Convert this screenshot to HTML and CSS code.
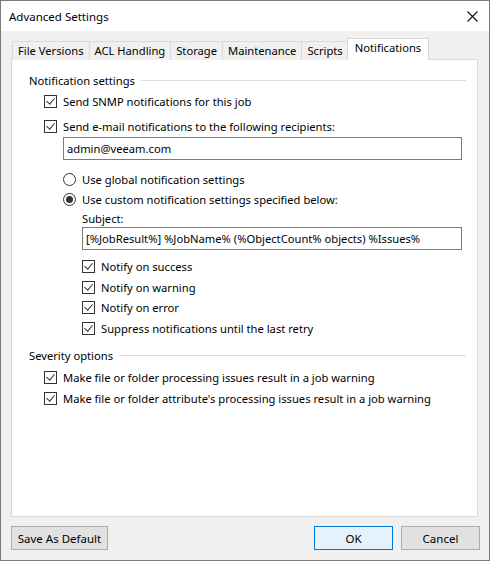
FILE: index.html
```html
<!DOCTYPE html>
<html lang="en">
<head>
    <meta charset="UTF-8">
    <title>Advanced Settings</title>
    <link rel="stylesheet" href="styles.css">
</head>
<body>

    <div class="window">
        <div class="titlebar">
            <span class="title">Advanced Settings</span>
            <span class="close">
                <svg width="11" height="11" viewBox="0 0 11 11"><path d="M0.5 0.5 L10.5 10.5 M10.5 0.5 L0.5 10.5" stroke="#111" stroke-width="1.1" fill="none"/></svg>
            </span>
        </div>

        <div class="dialog">
            <div class="tabs">
                <div class="tab">File Versions</div>
                <div class="tab">ACL Handling</div>
                <div class="tab">Storage</div>
                <div class="tab">Maintenance</div>
                <div class="tab">Scripts</div>
                <div class="tab active">Notifications</div>
            </div>

            <div class="panel">
                <div class="group-title"><span>Notification settings</span><i class="rule"></i></div>

                <div class="row lvl1 first"><span class="box checked"></span>Send SNMP notifications for this job</div>
                <div class="row lvl1 gap5"><span class="box checked"></span>Send e-mail notifications to the following recipients:</div>
                <div class="field lvl2 gap1">admin@veeam.com</div>

                <div class="row lvl2 gap9"><span class="radio"></span>Use global notification settings</div>
                <div class="row lvl2"><span class="radio selected"></span>Use custom notification settings specified below:</div>
                <div class="label lvl3">Subject:</div>
                <div class="field lvl3">[%JobResult%] %JobName% (%ObjectCount% objects) %Issues%</div>

                <div class="row lvl3 gap6"><span class="box checked"></span>Notify on success</div>
                <div class="row lvl3 gap1"><span class="box checked"></span>Notify on warning</div>
                <div class="row lvl3"><span class="box checked"></span>Notify on error</div>
                <div class="row lvl3 gap1"><span class="box checked"></span>Suppress notifications until the last retry</div>

                <div class="group-title gap7"><span>Severity options</span><i class="rule"></i></div>
                <div class="row lvl1 gap2"><span class="box checked"></span>Make file or folder processing issues result in a job warning</div>
                <div class="row lvl1 gap1"><span class="box checked"></span>Make file or folder attribute's processing issues result in a job warning</div>
            </div>

            <div class="footer">
                <button class="btn wide">Save As Default</button>
                <div class="spacer"></div>
                <button class="btn primary">OK</button>
                <button class="btn">Cancel</button>
            </div>
        </div>
    </div>

</body>
</html>
```

FILE: styles.css
```css
body {
    margin: 0;
    font-family: "Noto Sans", "Open Sans", sans-serif;
    font-size: 11.2px;
    color: #000;
    background-color: #f0f0f0;
}
.window {
    width: 490px;
    height: 561px;
    box-sizing: border-box;
    border: 1px solid #7a7a7a;
    display: flex;
    flex-direction: column;
}
.titlebar {
    height: 30px;
    background-color: white;
    display: flex;
    align-items: center;
    padding-left: 8px;
    padding-right: 11px;
}
.title {
    flex: 1;
    font-size: 11.5px;
}
.close {
    display: flex;
}
.dialog {
    flex: 1;
    background-color: #f0f0f0;
    padding: 8px 11px 0 10px;
    display: flex;
    flex-direction: column;
}

/* tabs */
.tabs {
    display: flex;
    align-items: flex-end;
    padding-left: 1px;
    height: 21px;
    position: relative;
    z-index: 1;
}
.tab {
    height: 18px;
    line-height: 18px;
    padding: 0 5px;
    border: 1px solid #d9d9d9;
    border-bottom: none;
    border-left: none;
    background-color: #f0f0f0;
    white-space: nowrap;
}
.tab:first-child {
    border-left: 1px solid #d9d9d9;
}
.tab.active {
    height: 21px;
    line-height: 17px;
    padding: 0 7px;
    margin-left: -2px;
    border-left: 1px solid #d9d9d9;
    background-color: white;
}

/* page */
.panel {
    height: 458px;
    box-sizing: border-box;
    background-color: white;
    border: 1px solid #d9d9d9;
    margin-top: -1px;
    padding: 10px 11px 0 17px;
}
.group-title {
    height: 20px;
    display: flex;
    align-items: center;
}
.group-title span {
    padding-right: 6px;
}
.rule {
    flex: 1;
    border-top: 1px solid #dcdcdc;
}
.row {
    height: 20px;
    display: flex;
    align-items: center;
    white-space: nowrap;
}
.lvl1 { margin-left: 15px; }
.lvl2 { margin-left: 34px; }
.lvl3 { margin-left: 53px; }
.first { margin-top: 1px; }
.gap1 { margin-top: 1px; }
.gap2 { margin-top: 2px; }
.gap5 { margin-top: 5px; }
.gap6 { margin-top: 6px; }
.gap7 { margin-top: 7px; }
.gap9 { margin-top: 9px; }

.box, .radio {
    width: 13px;
    height: 13px;
    box-sizing: border-box;
    border: 1px solid #333;
    background-color: white;
    margin-right: 6px;
    flex-shrink: 0;
    position: relative;
}
.box.checked::after {
    content: "";
    position: absolute;
    left: 3px;
    top: 0px;
    width: 4px;
    height: 7px;
    border-right: 1px solid #333;
    border-bottom: 1px solid #333;
    transform: rotate(40deg);
}
.radio {
    border-radius: 50%;
}
.radio.selected::after {
    content: "";
    position: absolute;
    left: 2px;
    top: 2px;
    width: 7px;
    height: 7px;
    border-radius: 50%;
    background-color: #333;
}
.label {
    height: 16px;
    line-height: 16px;
    margin-top: 2px;
}
.field {
    height: 23px;
    box-sizing: border-box;
    border: 1px solid #7a7a7a;
    padding: 0 3px;
    line-height: 21px;
    margin-right: 4px;
    white-space: nowrap;
    overflow: hidden;
}

/* buttons */
.footer {
    display: flex;
    margin-top: 9px;
}
.spacer {
    flex: 1;
}
.btn {
    height: 24px;
    width: 79px;
    font-family: inherit;
    font-size: 11.5px;
    background-color: #e1e1e1;
    border: 1px solid #adadad;
    padding: 0;
    margin-left: 8px;
    margin-right: 0;
}
.btn.wide {
    width: 97px;
    margin-left: 0;
}
.btn.primary {
    background-color: #e5f1fb;
    border-color: #0078d7;
}
.btn:last-child {
    margin-right: -2px;
}
```
